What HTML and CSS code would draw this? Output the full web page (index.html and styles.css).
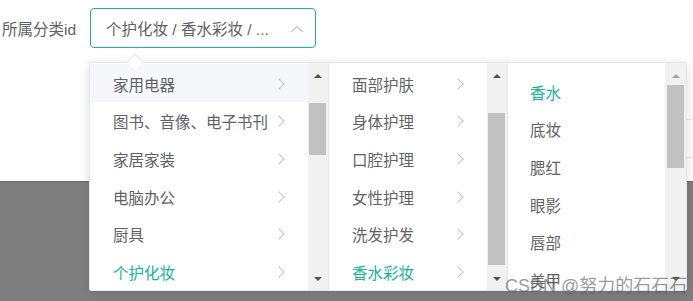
FILE: index.html
```html
<!DOCTYPE html>
<html>
<head>
<meta charset="utf-8">
<link rel="stylesheet" href="styles.css">
</head>
<body>
<div class="page">
  <div class="top">
    <div class="form-row">
      <label class="label">所属分类id</label>
      <div class="input">
        <span class="input-text">个护化妆 / 香水彩妆 / ...</span>
        <svg class="input-arrow" width="14" height="8" viewBox="0 0 14 8"><polyline points="1,7 7,1.5 13,7" fill="none" stroke="#c0c4cc" stroke-width="1.2"/></svg>
      </div>
    </div>
    <div class="table">
      <div class="trow"></div>
      <div class="trow"></div>
    </div>
  </div>
</div>

<div class="popper">
  <div class="caret"></div>
  <div class="panel">
    <div class="menu m1">
      <ul class="list">
        <li class="item hover"><span>家用电器</span><i class="chev"></i></li>
        <li class="item"><span>图书、音像、电子书刊</span><i class="chev"></i></li>
        <li class="item"><span>家居家装</span><i class="chev"></i></li>
        <li class="item"><span>电脑办公</span><i class="chev"></i></li>
        <li class="item"><span>厨具</span><i class="chev"></i></li>
        <li class="item active"><span>个护化妆</span><i class="chev"></i></li>
      </ul>
      <div class="sb">
        <div class="sb-btn up"><b class="tri-up"></b></div>
        <div class="thumb t1"></div>
        <div class="sb-fill"></div>
        <div class="sb-btn down"><b class="tri-down"></b></div>
      </div>
    </div>
    <div class="menu m2">
      <ul class="list">
        <li class="item"><span>面部护肤</span><i class="chev"></i></li>
        <li class="item"><span>身体护理</span><i class="chev"></i></li>
        <li class="item"><span>口腔护理</span><i class="chev"></i></li>
        <li class="item"><span>女性护理</span><i class="chev"></i></li>
        <li class="item"><span>洗发护发</span><i class="chev"></i></li>
        <li class="item active"><span>香水彩妆</span><i class="chev"></i></li>
      </ul>
      <div class="sb">
        <div class="sb-btn up"><b class="tri-up"></b></div>
        <div class="thumb t2"></div>
        <div class="sb-fill"></div>
        <div class="sb-btn down"><b class="tri-down"></b></div>
      </div>
    </div>
    <div class="menu m3">
      <ul class="list">
        <li class="item active"><span>香水</span></li>
        <li class="item"><span>底妆</span></li>
        <li class="item"><span>腮红</span></li>
        <li class="item"><span>眼影</span></li>
        <li class="item"><span>唇部</span></li>
        <li class="item"><span>美甲</span></li>
      </ul>
      <div class="sb">
        <div class="sb-btn up"><b class="tri-up light"></b></div>
        <div class="thumb t3"></div>
        <div class="sb-fill"></div>
        <div class="sb-btn down"><b class="tri-down"></b></div>
      </div>
    </div>
  </div>
</div>

<div class="watermark">CSDN @努力的石石石</div>
</body>
</html>
```

FILE: styles.css
```css
* { box-sizing: border-box; }
html, body { margin: 0; padding: 0; }
body {
  width: 693px;
  height: 301px;
  overflow: hidden;
  background: #7f7f7f;
  font-family: "Liberation Sans", "Noto Sans CJK SC", sans-serif;
  font-size: 15.5px;
  color: #606266;
  position: relative;
}
.page { width: 693px; }
.top {
  background: #fff;
  height: 181px;
  display: flex;
  flex-direction: column;
  box-shadow: 0 1px 1px rgba(0,0,0,0.15);
}
.form-row {
  display: flex;
  align-items: center;
  margin-top: 8px;
  height: 40px;
}
.label {
  width: 90px;
  padding-left: 2px;
  white-space: nowrap;
  color: #606266;
}
.input {
  width: 226px;
  height: 40px;
  border: 1px solid #1ab394;
  border-radius: 4px;
  display: flex;
  align-items: center;
  padding-left: 15px;
  padding-right: 11px;
}
.input-text {
  flex: 1;
  white-space: nowrap;
  overflow: hidden;
  color: #606266;
}
.input-arrow { display: block; margin-top: 1px; }
.table {
  margin-top: 71px;
  margin-left: 560px;
}
.trow {
  height: 38px;
  border-top: 1px solid #e4e7ed;
}

.popper {
  position: absolute;
  left: 89px;
  top: 62px;
  width: 598px;
  height: 229px;
}
.caret {
  position: absolute;
  left: 40px;
  top: -6px;
  width: 12px;
  height: 12px;
  background: #fff;
  border-left: 1px solid #e4e7ed;
  border-top: 1px solid #e4e7ed;
  transform: rotate(45deg);
  z-index: 2;
}
.panel {
  position: relative;
  z-index: 1;
  height: 100%;
  display: flex;
  background: #fff;
  border: 1px solid #e4e7ed;
  border-radius: 2px;
  box-shadow: 0 2px 12px rgba(0,0,0,0.12);
}
.menu {
  display: flex;
  height: 100%;
  border-right: 1px solid #e4e7ed;
}
.m1 { width: 239px; }
.m2 { width: 179px; }
.m3 { width: 178px; border-right: none; }
.list {
  list-style: none;
  margin: 0;
  padding: 1px 0 0 0;
  flex: 1;
  overflow: hidden;
}
.m3 .list { padding-top: 9px; }
.item {
  height: 37.6px;
  display: flex;
  align-items: center;
  justify-content: space-between;
  padding: 2px 23px 0 23px;
  white-space: nowrap;
  color: #606266;
}
.m3 .item { padding-left: 22px; }
.item.hover { background: #f5f7fa; }
.item.active { color: #1ab394; }
.chev {
  display: block;
  width: 8px;
  height: 8px;
  border-right: 1.2px solid #c0c4cc;
  border-top: 1.2px solid #c0c4cc;
  transform: rotate(45deg);
  margin-right: 2px;
}
.sb {
  width: 20px;
  height: 100%;
  background: #f1f1f1;
  display: flex;
  flex-direction: column;
  padding: 1px 2px 0 1px;
}
.m3 .sb { width: 21px; padding: 1px 2px 0 2px; }
.sb-btn {
  height: 21px;
  flex: none;
  display: flex;
  justify-content: center;
  align-items: center;
}
.sb-btn.up { padding-top: 2px; }
.sb-btn.down { padding-bottom: 2px; }
.sb-fill { flex: 1; }
.tri-up {
  width: 0; height: 0;
  border-left: 4.5px solid transparent;
  border-right: 4.5px solid transparent;
  border-bottom: 4.5px solid #505050;
}
.tri-up.light { border-bottom-color: #a3a3a3; }
.tri-down {
  width: 0; height: 0;
  border-left: 4.5px solid transparent;
  border-right: 4.5px solid transparent;
  border-top: 4.5px solid #505050;
}
.thumb { background: #c1c1c1; flex: none; }
.t1 { margin-top: 18px; height: 52px; }
.t2 { margin-top: 28px; height: 152px; }
.t3 { margin-top: 0; height: 83px; }

.watermark {
  position: absolute;
  left: 505px;
  top: 271px;
  font-size: 18px;
  color: rgba(95,95,95,0.65);
  white-space: nowrap;
  z-index: 5;
  font-family: "Liberation Sans", "Noto Sans CJK SC", sans-serif;
}
```
